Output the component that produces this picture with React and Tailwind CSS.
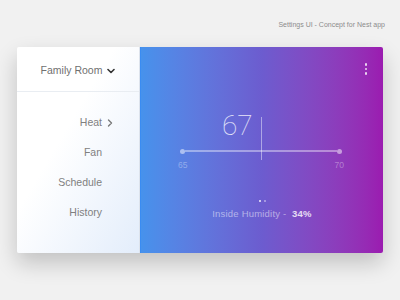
import React from "react";

const navItems = ["Heat", "Fan", "Schedule", "History"];

function ChevronDown() {
    return (
        <svg width="8" height="6" viewBox="0 0 8 6" className="ml-[5px] mt-[1px]">
            <polyline points="1,1.5 4,4.5 7,1.5" fill="none" stroke="#333" strokeWidth="1.6" strokeLinecap="round" strokeLinejoin="round" />
        </svg>
    );
}

function ChevronRight() {
    return (
        <svg width="6" height="8" viewBox="0 0 6 8">
            <polyline points="1.5,1 4.5,4 1.5,7" fill="none" stroke="#7a7a7a" strokeWidth="1.4" strokeLinecap="round" strokeLinejoin="round" />
        </svg>
    );
}

export default function App() {
    return (
        <div className="w-[400px] h-[300px] bg-[#f1f1f1] overflow-hidden" style={{ fontFamily: '"Liberation Sans", Arial, sans-serif' }}>
            {/* caption */}
            <div className="flex justify-end pt-[20px] pr-[15px]">
                <p className="text-[7px] leading-[10px] text-[#8c8c8c]">Settings UI - Concept for Nest app</p>
            </div>

            {/* card */}
            <div className="ml-[17px] mt-[17px] w-[366px] h-[206px] flex rounded-[2px] overflow-hidden shadow-[0_10px_22px_rgba(0,0,0,0.2)]">
                {/* sidebar */}
                <div className="w-[123px] flex flex-col bg-linear-to-br from-white from-40% to-[#e3edfb] border-r border-[#dde3ec]">
                    <div className="h-[45px] pt-[3px] flex items-center justify-center border-b border-[#e9edf2]">
                        <span className="text-[10.5px] text-[#707070]">Family Room</span>
                        <ChevronDown />
                    </div>
                    <div className="flex flex-col pt-[16px]">
                        {navItems.map((item, i) => (
                            <div key={item} className="h-[30px] flex items-center justify-end pr-[25px]">
                                <span className="text-[10.5px] text-[#808080]">{item}</span>
                                <span className="w-[12px] pl-[5px] flex items-center">
                                    {i === 0 && <ChevronRight />}
                                </span>
                            </div>
                        ))}
                    </div>
                </div>

                {/* thermostat */}
                <div className="flex-1 flex flex-col border-l border-[#3a8cf2] bg-linear-to-r from-[#4692ec] via-[#6c5ccf] to-[#9b1bb0]">
                    <div className="flex justify-end pt-[16px] pr-[16px]">
                        <div className="flex flex-col gap-[2px]">
                            <span className="w-[2.5px] h-[2.5px] rounded-full bg-white/80"></span>
                            <span className="w-[2.5px] h-[2.5px] rounded-full bg-white/80"></span>
                            <span className="w-[2.5px] h-[2.5px] rounded-full bg-white/80"></span>
                        </div>
                    </div>

                    <div className="mt-[37px] ml-[39px] w-[162px] relative">
                        <p className="pl-[42px] text-[28px] leading-[28px] font-thin text-white/85" style={{ fontFamily: 'Roboto, "Liberation Sans", sans-serif' }}>67</p>
                        <div className="mt-[9px] h-[5px] flex items-center">
                            <span className="w-[5px] h-[5px] rounded-full bg-white/50"></span>
                            <span className="flex-1 h-[1.5px] bg-white/40"></span>
                            <span className="w-[5px] h-[5px] rounded-full bg-white/50"></span>
                        </div>
                        <span className="absolute left-[81px] top-[5px] w-px h-[43px] bg-white/45"></span>
                        <div className="mt-[6px] -mx-[2px] flex justify-between text-[8.5px] leading-[10px] text-white/35">
                            <span>65</span>
                            <span>70</span>
                        </div>
                    </div>

                    <div className="mt-[30px] flex justify-center gap-[3px]">
                        <span className="w-[2px] h-[2px] rounded-full bg-white/90"></span>
                        <span className="w-[2px] h-[2px] rounded-full bg-white/50"></span>
                    </div>
                    <p className="mt-[6px] text-center text-[9.5px] leading-[12px] tracking-[0.2px] text-white/50">
                        Inside Humidity -&nbsp; <span className="font-bold text-white/80">34%</span>
                    </p>
                </div>
            </div>
        </div>
    );
}
